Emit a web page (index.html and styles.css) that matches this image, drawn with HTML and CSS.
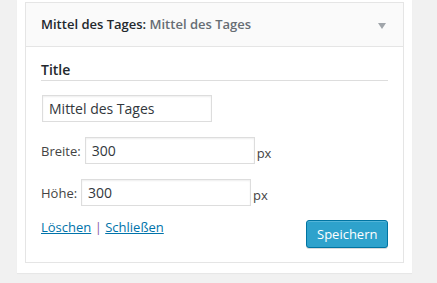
FILE: index.html
```html
<!DOCTYPE html>
<html lang="de">
<head>
<meta charset="utf-8">
<title>Widget</title>
<link rel="stylesheet" href="styles.css">
</head>
<body>
<div class="panel">
  <div class="widget">
    <div class="widget-top">
      <h3 class="widget-title">Mittel des Tages: <span class="in-title">Mittel des Tages</span></h3>
      <span class="toggle" aria-hidden="true"></span>
    </div>
    <div class="widget-inside">
      <div class="section-title">Title</div>
      <input class="field title-field" type="text" value="Mittel des Tages">
      <div class="row row-first">
        <label class="lbl">Breite:</label>
        <input class="field num-field" type="text" value="300">
        <span class="unit">px</span>
      </div>
      <div class="row row-second">
        <label class="lbl">Höhe:</label>
        <input class="field num-field" type="text" value="300">
        <span class="unit">px</span>
      </div>
      <div class="actions">
        <div class="links"><a href="#">Löschen</a> <span class="sep">|</span> <a href="#">Schließen</a></div>
        <button class="btn" type="button">Speichern</button>
      </div>
    </div>
  </div>
</div>
</body>
</html>
```
FILE: styles.css
```css
html, body {
  margin: 0;
  padding: 0;
}
body {
  background: #f1f1f1;
  font-family: "Open Sans", "Liberation Sans", sans-serif;
  color: #444;
  font-size: 13px;
  height: 283px;
  overflow: hidden;
}
.panel {
  margin-left: 17px;
  width: 395px;
  box-sizing: border-box;
  background: #fff;
  padding: 2px 8px 10px 8px;
  box-shadow: 0 1px 1px rgba(0,0,0,0.04);
}
.widget {
  border: 1px solid #e5e5e5;
  background: #fff;
}
.widget-top {
  height: 43px;
  background: #fafafa;
  border-bottom: 1px solid #e5e5e5;
  display: flex;
  align-items: center;
  justify-content: space-between;
  padding: 0 17px 0 15px;
}
.widget-title {
  margin: 0;
  font-size: 13px;
  font-weight: 600;
  color: #23282d;
  line-height: 1;
}
.in-title {
  color: #666d74;
}
.toggle {
  width: 0;
  height: 0;
  border-left: 4px solid transparent;
  border-right: 4px solid transparent;
  border-top: 6px solid #a0a5aa;
  margin-top: 2px;
}
.widget-inside {
  padding: 13px 15px 14px 15px;
}
.section-title {
  font-size: 14px;
  font-weight: 600;
  color: #23282d;
  line-height: 19px;
  padding-bottom: 1px;
  border-bottom: 1px solid #ddd;
}
.field {
  box-sizing: border-box;
  height: 27px;
  border: 1px solid #ddd;
  padding: 0 6px;
  font-family: "Open Sans", "Liberation Sans", sans-serif;
  font-size: 14px;
  color: #32373c;
  background: #fff;
  box-shadow: inset 0 1px 2px rgba(0,0,0,0.07);
  outline: none;
  margin: 0;
}
.title-field {
  display: block;
  width: 170px;
  margin-top: 14px;
  margin-left: 1px;
}
.row {
  display: flex;
  align-items: center;
}
.row-first {
  margin-top: 15px;
}
.row-second {
  margin-top: 15px;
}
.lbl {
  font-size: 13px;
  color: #444;
  margin-right: 4px;
}
.num-field {
  width: 170px;
}
.unit {
  font-size: 13px;
  color: #444;
  margin-left: 2px;
  margin-top: 4px;
}
.actions {
  display: flex;
  justify-content: space-between;
  align-items: flex-start;
  margin-top: 12px;
}
.links {
  font-size: 13px;
  line-height: 18px;
}
.links a {
  color: #0073aa;
  text-decoration: underline;
}
.sep {
  color: #8c5ea6;
}
.btn {
  box-sizing: border-box;
  width: 82px;
  height: 28px;
  background: #2ea2cc;
  border: 1px solid #0074a2;
  border-radius: 3px;
  color: #fff;
  font-family: "Open Sans", "Liberation Sans", sans-serif;
  font-size: 13px;
  padding: 0 10px;
  box-shadow: inset 0 1px 0 rgba(120,200,230,0.5), 0 1px 0 rgba(0,0,0,0.15);
  margin-top: 2px;
}
```
